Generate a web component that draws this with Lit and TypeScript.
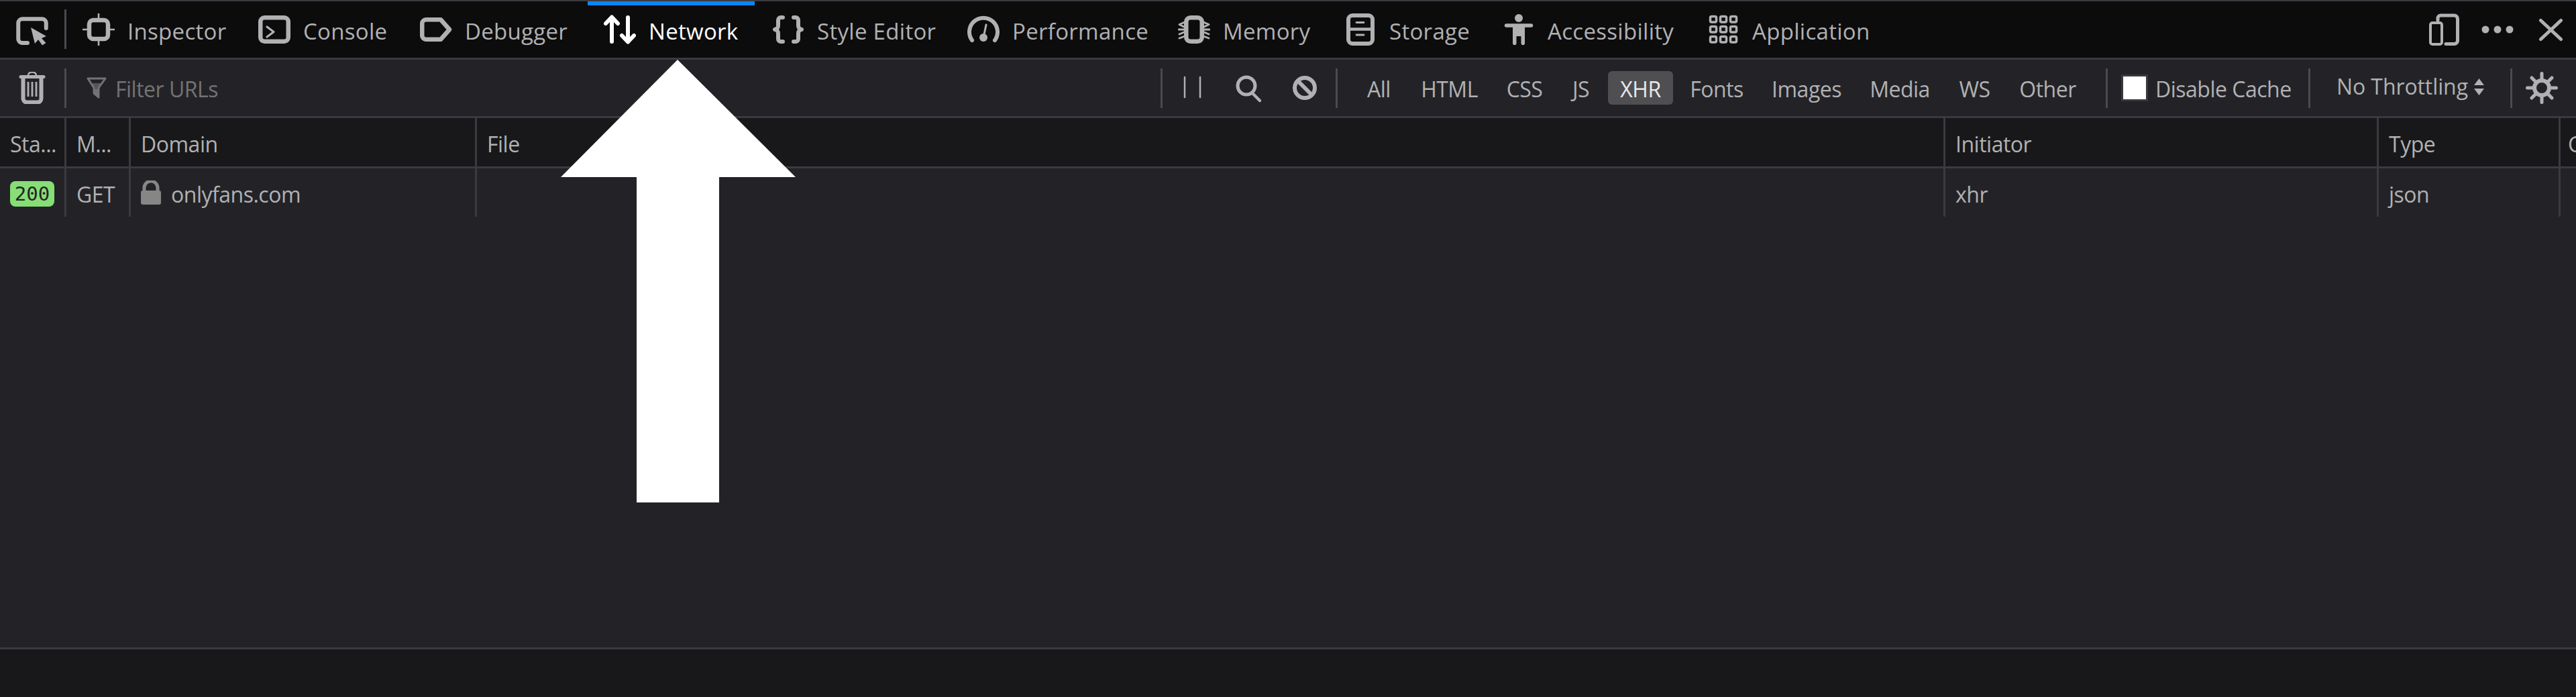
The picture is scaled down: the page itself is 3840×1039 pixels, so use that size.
import { LitElement, html, css, svg } from "lit";
import { customElement } from "lit/decorators.js";

const tabIcons: Record<string, unknown> = {
  inspector: svg`<rect x="10" y="10" width="28" height="28" rx="6" fill="none" stroke="currentColor" stroke-width="6.500"/><path d="M0 24H7M41 24H48M24 0V7M24 41V48" stroke="currentColor" stroke-width="2.600" fill="none"/>`,
  console: svg`<rect x="3.250" y="6.250" width="41.500" height="35.500" rx="6" fill="none" stroke="currentColor" stroke-width="6.500"/><path d="M13 20L23 27.500 13 35" fill="none" stroke="currentColor" stroke-width="3.200" stroke-linecap="round" stroke-linejoin="round"/>`,
  debugger: svg`<path d="M9 9.250H31L44 24 31 38.750H9A5.750 5.750 0 0 1 3.250 33V15A5.750 5.750 0 0 1 9 9.250Z" fill="none" stroke="currentColor" stroke-width="6.500" stroke-linejoin="round"/>`,
  network: svg`<path d="M12 6V42M3 15L12 5.500 21 15M36 6V42M27 33L36 42.500 45 33" fill="none" stroke="currentColor" stroke-width="6" stroke-linecap="round" stroke-linejoin="round"/>`,
  style: svg`<path d="M16 6H13A4 4 0 0 0 9 10V18A5.500 5.500 0 0 1 4 24 5.500 5.500 0 0 1 9 30V38A4 4 0 0 0 13 42H16M32 6H35A4 4 0 0 1 39 10V18A5.500 5.500 0 0 0 44 24 5.500 5.500 0 0 0 39 30V38A4 4 0 0 1 35 42H32" fill="none" stroke="currentColor" stroke-width="6" stroke-linecap="round" stroke-linejoin="round"/>`,
  performance: svg`<path d="M7 40A21 21 0 1 1 41 40" fill="none" stroke="currentColor" stroke-width="6" stroke-linecap="round"/><circle cx="24" cy="36" r="6" fill="currentColor"/><path d="M24 36L28 17" stroke="currentColor" stroke-width="3" stroke-linecap="round"/>`,
  memory: svg`<rect x="12.250" y="6.250" width="23.500" height="35.500" rx="6.500" fill="none" stroke="currentColor" stroke-width="6.500"/><path d="M10 13L2 16.500 9 20M10 24L1 24M10 34L2 37M9 28L2 31M38 13L46 16.500 39 20M38 24L47 24M38 34L46 37M39 28L46 31" fill="none" stroke="currentColor" stroke-width="2.800" stroke-linecap="round" stroke-linejoin="round"/>`,
  storage: svg`<rect x="6" y="3" width="36" height="42" rx="6" fill="none" stroke="currentColor" stroke-width="6"/><path d="M5 23.500H43" stroke="currentColor" stroke-width="4.500"/><path d="M18 13.500H29M18 32H29" stroke="currentColor" stroke-width="2.800" stroke-linecap="round"/>`,
  accessibility: svg`<circle cx="24" cy="7" r="6" fill="currentColor"/><path d="M5.500 18H42.500" stroke="currentColor" stroke-width="5.500" stroke-linecap="round"/><path d="M15 17H33V45A2.800 2.800 0 0 1 27.500 45V34H20.500V45A2.800 2.800 0 0 1 15 45Z" fill="currentColor"/>`,
  application: svg`<g fill="none" stroke="currentColor" stroke-width="3.500"><rect x="4.500" y="4.500" width="9" height="8.500" rx="2"/><rect x="19.500" y="4.500" width="9" height="8.500" rx="2"/><rect x="34.500" y="4.500" width="9" height="8.500" rx="2"/><rect x="4.500" y="19.500" width="9" height="8.500" rx="2"/><rect x="19.500" y="19.500" width="9" height="8.500" rx="2"/><rect x="34.500" y="19.500" width="9" height="8.500" rx="2"/><rect x="4.500" y="34.500" width="9" height="8.500" rx="2"/><rect x="19.500" y="34.500" width="9" height="8.500" rx="2"/><rect x="34.500" y="34.500" width="9" height="8.500" rx="2"/></g>`,
};

const TABS = [
  { id: "inspector", label: "Inspector", width: 262 },
  { id: "console", label: "Console", width: 241 },
  { id: "debugger", label: "Debugger", width: 274 },
  { id: "network", label: "Network", width: 249, active: true },
  { id: "style", label: "Style Editor", width: 291 },
  { id: "performance", label: "Performance", width: 314 },
  { id: "memory", label: "Memory", width: 248 },
  { id: "storage", label: "Storage", width: 236 },
  { id: "accessibility", label: "Accessibility", width: 305 },
  { id: "application", label: "Application", width: 293 },
];

const FILTERS = [
  { label: "All", width: 73 },
  { label: "HTML", width: 121 },
  { label: "CSS", width: 87 },
  { label: "JS", width: 65 },
  { label: "XHR", width: 97, active: true },
  { label: "Fonts", width: 114 },
  { label: "Images", width: 138 },
  { label: "Media", width: 124 },
  { label: "WS", width: 83 },
  { label: "Other", width: 119 },
];

const COLUMNS = [
  { head: "Sta...", width: 99 },
  { head: "M...", width: 96 },
  { head: "Domain", width: 516 },
  { head: "File", width: 2189 },
  { head: "Initiator", width: 646 },
  { head: "Type", width: 271 },
  { head: "Content", width: 23 },
];

@customElement("app-root")
export class AppRoot extends LitElement {
  static styles = css`
    :host {
      display: flex;
      flex-direction: column;
      position: relative;
      width: 3840px;
      height: 1039px;
      overflow: hidden;
      background: #232327;
      color: #b1b1b3;
      font-family: "Open Sans", "Noto Sans", sans-serif;
      font-size: 32px;
      letter-spacing: -0.5px;
      white-space: nowrap;
    }
    svg { display: block; flex: none; }
    .ic { width: 48px; height: 48px; color: #b1b1b3; }

    .tabbar {
      display: flex;
      flex: none;
      height: 84px;
      background: #0c0c0d;
      border-top: 2px solid #3a3a40;
      border-bottom: 3px solid #3a3a40;
      font-size: 33px;
      letter-spacing: 0.3px;
    }
    .pick { width: 72px; padding: 20px 0 0 24px; }
    .vsep { flex: none; width: 3px; background: #4a4a4f; align-self: center; height: 59px; }
    .tabbar .vsep { margin-top: -1px; }
    .tab {
      display: flex;
      align-items: center;
      flex: none;
      box-sizing: border-box;
      height: 84px;
      padding-left: 24px;
      border-top: 6px solid transparent;
    }
    .tab .ic { align-self: flex-start; margin-top: 12px; }
    .tab span { margin-left: 19px; margin-top: -1px; }
    .tab.active { border-top-color: #0a84ff; color: #fff; margin-right: 2px; }
    .tab.active .ic { color: #fff; }
    .spacer { flex: 1; }
    .win { margin-top: 18px; }
    .win.dots { margin-left: 30px; }
    .win.close { margin-left: 32px; margin-right: 13px; }

    .toolbar {
      display: flex;
      align-items: center;
      flex: none;
      height: 84px;
      border-bottom: 3px solid #3a3a40;
    }
    .trash { width: 96px; display: flex; justify-content: center; }
    .filter-url { flex: 1; display: flex; align-items: center; padding-left: 30px; color: #737373; }
    .filter-url svg { margin-right: 13px; }
    .filter-url span { padding-top: 3px; }
    .pause { margin-left: 27px; width: 35px; height: 48px; }
    .search { margin-left: 41px; }
    .block { margin-left: 37px; }
    .sep-a { margin-left: 22px; }
    .filters { display: flex; gap: 8px; margin-left: 25px; }
    .fbtn {
      display: flex;
      align-items: center;
      justify-content: center;
      flex: none;
      box-sizing: border-box;
      height: 50px;
      border-radius: 6px;
      padding-top: 3px;
    }
    .fbtn.active { background: #4f4f52; color: #e8e8ea; }
    .sep-b { margin-left: 27px; }
    .check {
      flex: none;
      box-sizing: border-box;
      width: 40px;
      height: 40px;
      margin-left: 20px;
      background: #fff;
      border: 3px solid #38383d;
    }
    .cache { width: 228px; margin-left: 11px; flex: none; box-sizing: border-box; padding-top: 3px; }
    .throttle {
      display: flex;
      align-items: center;
      justify-content: space-between;
      flex: none;
      box-sizing: border-box;
      width: 298px;
      padding: 0 39px;
      letter-spacing: -0.1px;
    }
    .throttle span { margin-top: -5px; }
    .throttle svg { margin-top: -3px; }
    .gear { margin-left: 20px; margin-right: 27px; }

    .headrow, .datarow { display: flex; flex: none; }
    .headrow {
      height: 72px;
      background: #18181a;
      border-bottom: 3px solid #3a3a40;
    }
    .datarow { height: 72px; }
    .cell {
      display: flex;
      align-items: center;
      flex: none;
      box-sizing: border-box;
      padding: 4px 0 0 15px;
      border-right: 3px solid #3a3a40;
      overflow: hidden;
    }
    .cell:last-child { border-right: 0; padding-left: 11px; }
    .badge {
      display: flex;
      align-items: center;
      justify-content: center;
      width: 66px;
      height: 38px;
      background: #86de74;
      border-radius: 8px;
      color: #232327;
      font-family: "DejaVu Sans Mono", monospace;
      font-size: 29px;
      letter-spacing: 0;
    }
    .lock { width: 30px; height: 36px; margin-right: 15px; margin-top: -4px; }
    .fill { flex: 1; }
    .statusbar {
      flex: none;
      height: 71px;
      background: #18181a;
      border-top: 3px solid #3a3a40;
    }
    .arrow { position: absolute; left: 836px; top: 89px; width: 350px; height: 660px; }
  `;

  private row(cells: unknown[]) {
    return COLUMNS.map(
      (c, i) => html`<div class="cell" style="width:${c.width}px">${cells[i]}</div>`
    );
  }

  render() {
    return html`
      <div class="tabbar">
        <div class="pick">
          <svg class="ic" viewBox="0 0 48 48">
            <path d="M17 42H9A6 6 0 0 1 3.250 36V12A6 6 0 0 1 9 6.250H39A6 6 0 0 1 44.750 12V20" fill="none" stroke="currentColor" stroke-width="6" stroke-linecap="round"/>
            <path d="M22 19L45 32 38 35 44.500 42 39 45.500 33 37 28 43Z" fill="currentColor"/>
          </svg>
        </div>
        <div class="vsep"></div>
        ${TABS.map(
          (t) => html`<div class="tab ${t.active ? "active" : ""}" style="width:${t.width}px">
            <svg class="ic" viewBox="0 0 48 48">${tabIcons[t.id]}</svg><span>${t.label}</span>
          </div>`
        )}
        <div class="spacer"></div>
        <svg class="ic win" viewBox="0 0 48 48">
          <path d="M13 10V7A4 4 0 0 1 17 3H38A5 5 0 0 1 42.500 8V41A5 5 0 0 1 38 45.500H25" fill="none" stroke="currentColor" stroke-width="5" stroke-linecap="round"/>
          <rect x="2" y="14" width="17" height="32" rx="3" fill="none" stroke="currentColor" stroke-width="4"/>
        </svg>
        <svg class="ic win dots" viewBox="0 0 48 48">
          <circle cx="6" cy="24" r="5.500" fill="currentColor"/>
          <circle cx="24" cy="24" r="5.500" fill="currentColor"/>
          <circle cx="42" cy="24" r="5.500" fill="currentColor"/>
        </svg>
        <svg class="ic win close" viewBox="0 0 48 48">
          <path d="M8.500 10.500L38.500 38.500M38.500 10.500L8.500 38.500" fill="none" stroke="currentColor" stroke-width="5" stroke-linecap="round"/>
        </svg>
      </div>

      <div class="toolbar">
        <div class="trash">
          <svg class="ic" viewBox="0 0 48 48">
            <path d="M7 7.500H41" stroke="currentColor" stroke-width="5" stroke-linecap="round"/>
            <path d="M18 5A6 4.500 0 0 1 30 5" fill="none" stroke="currentColor" stroke-width="2.500"/>
            <path d="M10.500 9V40A5.500 5.500 0 0 0 16 45.500H32A5.500 5.500 0 0 0 37.500 40V9" fill="none" stroke="currentColor" stroke-width="6"/>
            <path d="M18 15V37M24 15V37M30 15V37" stroke="currentColor" stroke-width="2.800"/>
          </svg>
        </div>
        <div class="vsep"></div>
        <div class="filter-url">
          <svg width="30" height="32" viewBox="0 0 30 32">
            <path d="M7 9H23L18 16V30L11 24V16Z" fill="#56565a"/>
            <path d="M12 18H17V29L12 24Z" fill="#737373"/>
            <path d="M2 2H28L18 16V30L11 24V16Z" fill="none" stroke="#737373" stroke-width="3" stroke-linejoin="round"/>
          </svg>
          <span>Filter URLs</span>
        </div>
        <div class="vsep"></div>
        <svg class="pause" viewBox="0 0 35 48">
          <path d="M6 8V38M29 8V38" stroke="#b1b1b3" stroke-width="2.500" stroke-linecap="round"/>
        </svg>
        <svg class="ic search" viewBox="0 0 48 48">
          <circle cx="22" cy="21" r="13" fill="none" stroke="currentColor" stroke-width="5"/>
          <path d="M31 32L42 43" stroke="currentColor" stroke-width="4.500" stroke-linecap="round"/>
        </svg>
        <svg class="ic block" viewBox="0 0 48 48">
          <circle cx="24" cy="24" r="15" fill="none" stroke="currentColor" stroke-width="6"/>
          <path d="M13 13L35 35" stroke="currentColor" stroke-width="6"/>
        </svg>
        <div class="vsep sep-a"></div>
        <div class="filters">
          ${FILTERS.map(
            (f) => html`<div class="fbtn ${f.active ? "active" : ""}" style="width:${f.width}px">${f.label}</div>`
          )}
        </div>
        <div class="vsep sep-b"></div>
        <div class="check"></div>
        <div class="cache">Disable Cache</div>
        <div class="vsep"></div>
        <div class="throttle">
          <span>No Throttling</span>
          <svg width="15" height="26" viewBox="0 0 15 26">
            <path d="M7.500 0L15 10H0ZM7.500 25L0 15H15Z" fill="#b1b1b3"/>
          </svg>
        </div>
        <div class="vsep"></div>
        <svg class="ic gear" viewBox="0 0 48 48">
          <circle cx="24" cy="24" r="11" fill="none" stroke="currentColor" stroke-width="6"/>
          <path d="M24 2.500V10M24 38V45.500M2.500 24H10M38 24H45.500M9 9L14 14M34 34L39 39M39 9L34 14M14 34L9 39" stroke="currentColor" stroke-width="5" stroke-linecap="round"/>
        </svg>
      </div>

      <div class="headrow">${this.row(COLUMNS.map((c) => c.head))}</div>
      <div class="datarow">
        ${this.row([
          html`<div class="badge">200</div>`,
          "GET",
          html`<svg class="lock" viewBox="0 0 30 36">
              <path d="M5 16V11A10 10 0 0 1 25 11V16" fill="none" stroke="#868686" stroke-width="5"/>
              <rect x="0" y="15" width="30" height="21" rx="3" fill="#868686"/>
            </svg>onlyfans.com`,
          "",
          "xhr",
          "json",
          "",
        ])}
      </div>
      <div class="fill"></div>
      <div class="statusbar"></div>

      <svg class="arrow" viewBox="0 0 350 660">
        <path d="M174 0L350 175H236V660H113V175H0Z" fill="#fff"/>
      </svg>
    `;
  }
}
